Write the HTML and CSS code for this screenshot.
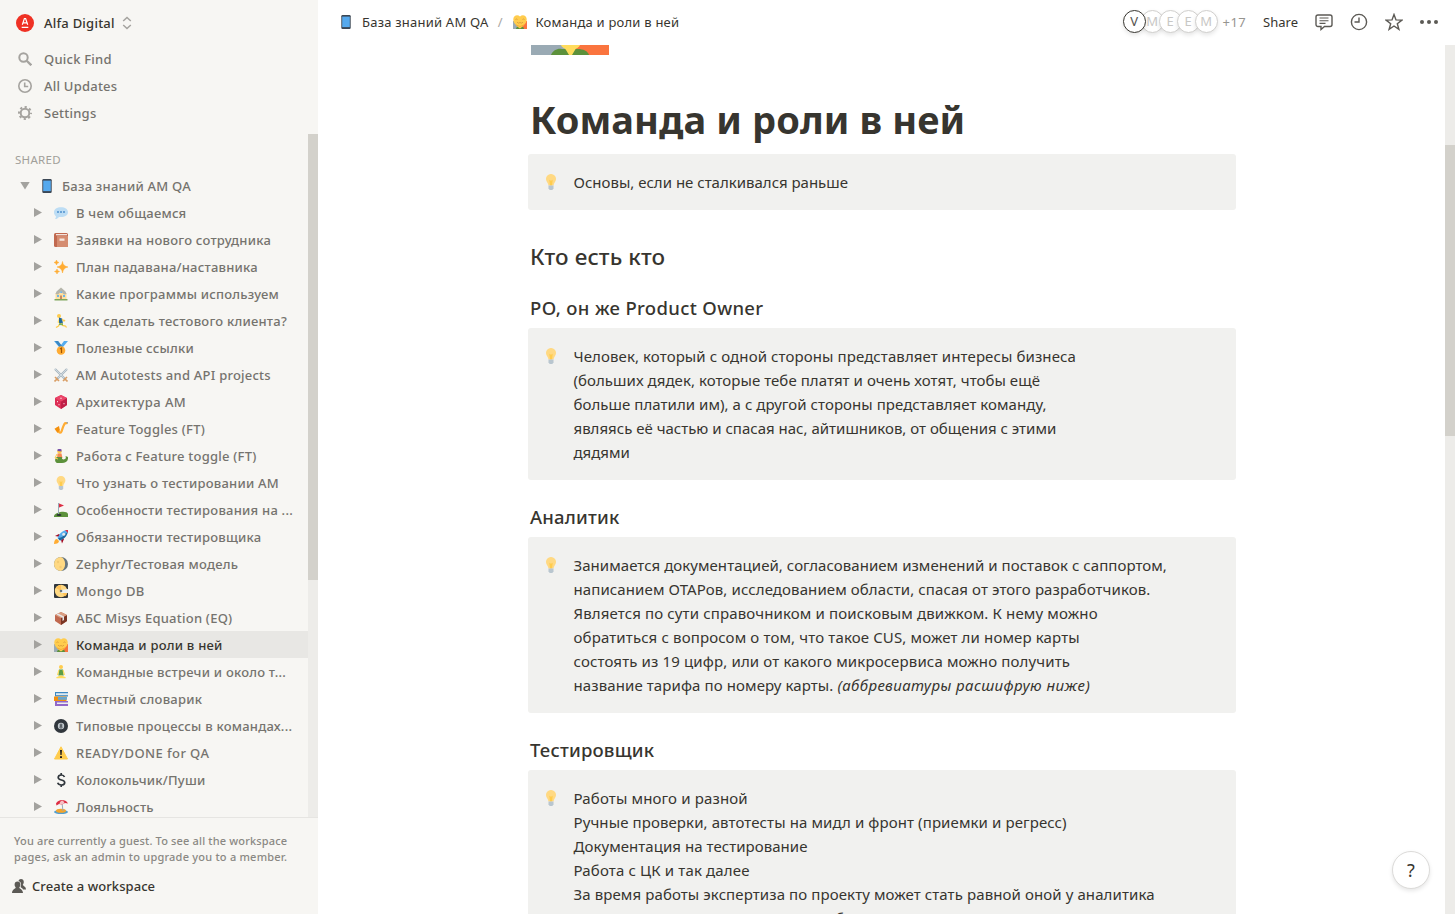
FILE: index.html
```html
<!DOCTYPE html>
<html lang="ru">
<head>
<meta charset="utf-8">
<title>Команда и роли в ней</title>
<link rel="stylesheet" href="styles.css">
</head>
<body>
<svg class="sprite" width="0" height="0" aria-hidden="true">
  <symbol id="phone" viewBox="0 0 14 14"><rect x="2.3" y="0" width="9.4" height="14" rx="1.2" fill="#3b4754"/><rect x="3.2" y="1.6" width="7.6" height="10.5" fill="#55a9ee"/></symbol>
  <symbol id="bulb" viewBox="0 0 14 14"><path d="M7 0a4.3 4.3 0 0 0-4.4 4.4C2.6 6.800 4.600 7.600 4.800 10h4.400c.2-2.400 2.200-3.200 2.200-5.600A4.300 4.300 0 0 0 7 0z" fill="#ffd983"/><path d="M5.500 5l1.500 1 1.500-1-.6 5H6.100z" fill="#ffcc4d"/><path d="M4.800 10h4.400v2.500L8.200 14H5.800l-1-1.500z" fill="#b9c6cf"/></symbol>
  <symbol id="hug" viewBox="0 0 14 14"><path d="M0 6h7v8H0z" fill="#9aaab4"/><path d="M7 6h7v8H7z" fill="#fa743e"/><path d="M3 14c0-2 2-3 4-3s4 1 4 3z" fill="#5c913b"/><path d="M7 13.500C4 11 0 8 .3 4 .5.500 4.500-1 7 1.500 9.500-1 13.500.5 13.700 4 14 8 10 11 7 13.500z" fill="#ffcc4d"/><path d="M2.500 4.500q1-1 2 0m5 0q1-1 2 0M4 7.200q1.500 1.700 3 .3 1.500 1.400 3-.3" fill="none" stroke="#c98a35" stroke-width=".6"/><path d="M3 10l4 1.500 4-1.500" fill="none" stroke="#f4a52c" stroke-width=".8"/></symbol>
  <symbol id="chat" viewBox="0 0 14 14"><path d="M7 1.300c4 0 7 2 7 4.900S11 11 7 11l-2-.1C4 12.300 2.500 13 1 12.900c.8-.8 1-1.700.9-2.700C.7 9.300 0 7.800 0 6.200c0-2.900 3-4.900 7-4.900z" fill="#bdddf4"/><path d="M3 5h2v2H3zm3 0h2v2H6zm3 0h2v2H9z" fill="#6aa4d8"/></symbol>
  <symbol id="book" viewBox="0 0 14 14"><rect width="14" height="14" rx="1.500" fill="#c1694f"/><path d="M2 1h11v1.300H2z" fill="#f3e4dc"/><path d="M3 3h11v11H3z" fill="#d58c70"/><path d="M5.500 5.500h5v2.300h-5z" fill="#f4e7df"/></symbol>
  <symbol id="spark" viewBox="0 0 14 14"><path d="M8.500 1.500q.6 4.700 5.500 5.500-4.900.8-5.500 6-.6-5.200-5.500-6 4.900-.8 5.500-5.500zM2.500 0q.3 2.200 2.500 2.500Q2.800 2.800 2.500 5 2.200 2.800 0 2.500 2.200 2.200 2.500 0zM3 9q.3 2.200 2.500 2.500Q3.300 11.800 3 14q-.3-2.200-2.500-2.500Q2.700 11.200 3 9z" fill="#ffac33" stroke="#ffac33" stroke-width=".5"/></symbol>
  <symbol id="house" viewBox="0 0 14 14"><path d="M1.500 6h11v7h-11z" fill="#ffe0a0"/><path d="M7 .5l4.500 4L12.500 7 10 7.500l-3-3-3 3L1.500 7l1-2.500z" fill="#b5b5ab"/><path d="M6.200 4.500h1.800v1.500H6.200zM3 8h2v2H3zm6 0h2v2H9z" fill="#6fb5e8"/><path d="M6 8.500h2V13H6z" fill="#c98a5f"/><path d="M.5 12h13v1.500H.5z" fill="#7ea65d"/></symbol>
  <symbol id="run" viewBox="0 0 14 14"><circle cx="5" cy="2" r="2" fill="#ffcc4d"/><path d="M4.500 4l-1 4.500 1.500.5z" fill="#ffdc5d"/><path d="M5 3.500l3 1 1 5-4 .5z" fill="#269"/><path d="M8 5l2 2 1-1M6 9l-1.500 3L2 13.500M7.500 9l1 2.500 3 .5 1 1.500" fill="none" stroke="#ffcc4d" stroke-width="1.300"/><path d="M5 9.500h4v1.700L5 11z" fill="#77b255"/></symbol>
  <symbol id="medal" viewBox="0 0 14 14"><path d="M0 0h4l3 4 3-4h4l-5 6H5z" fill="#55acee"/><path d="M4 0l4.500 5.500-3 .5L1 0z" fill="#3b88c3"/><circle cx="7" cy="9.500" r="4.300" fill="#ffac33"/><path d="M6 8l1.500-1v5" fill="none" stroke="#9e5200" stroke-width="1.200"/></symbol>
  <symbol id="swords" viewBox="0 0 14 14"><path d="M1 1l10 10M13 1L3 11" stroke="#a7b6c0" stroke-width="2.200"/><path d="M.5.500L10 10M13.500.500L4 10" stroke="#e1e8ed" stroke-width=".7"/><path d="M1 9l4 4m8-4l-4 4M3 11l-2.500 2.500M11 11l2.500 2.500" stroke="#d99e65" stroke-width="1.600"/></symbol>
  <symbol id="die" viewBox="0 0 14 14"><path d="M7 0l6 3v7l-6 4-6-4V3z" fill="#dd2e55"/><path d="M7 6.500L13 3v7l-6 4z" fill="#c01f47"/><path d="M7 0l6 3-6 3.500L1 3z" fill="#ea4568"/><path d="M6.200 2.700h1.600v1H6.200zM3 6h1v1.300H3zM4.500 9h1v1.300h-1zM9.500 8h1v1.300h-1z" fill="#fbd0d9"/></symbol>
  <symbol id="sax" viewBox="0 0 14 14"><path d="M13.500.8L11 1.300C9.500 3 8.500 6.500 7.500 9.500 7 11.300 5 11 4.500 9l-1-3.500" fill="none" stroke="#ffac33" stroke-width="2.200"/><path d="M.5 6.800L5 4l.8 4L3.500 11z" fill="#f4900c"/><path d="M12 0h2v2z" fill="#99aab5"/></symbol>
  <symbol id="mer" viewBox="0 0 14 14"><circle cx="5.500" cy="2.500" r="2.200" fill="#ffcc4d"/><path d="M3.500.5q2-1.300 4 0v2l-4-.5z" fill="#744eaa"/><path d="M3.500 4.500h4l1 4.500H3z" fill="#f58a55"/><path d="M3 8h5c-.5 2 1 3 3 2 1-.5 1-2 .5-3L14 8c.5 4-2.500 6-6 6H3C0 13 1 9 3 8z" fill="#5c913b"/><path d="M3 5l-2 4 3 1" fill="none" stroke="#ffcc4d"/></symbol>
  <symbol id="golf" viewBox="0 0 14 14"><path d="M0 13c1-4 13-6 14-2v3H0z" fill="#5c913b"/><path d="M4 0l6 2.500L4 5z" fill="#dd2e44"/><path d="M4.500 0v12" stroke="#99aab5"/><ellipse cx="5" cy="12" rx="2.500" ry="1" fill="#292f33"/></symbol>
  <symbol id="rocket" viewBox="0 0 14 14"><path d="M1 6l4-2 5 5-2 4.500-1-4-3-3z" fill="#a0041e"/><path d="M14 0C9 0 5.500 3 3.500 8L6 10.500C11 8.500 14 5 14 0z" fill="#55acee"/><path d="M8 7L4 8.500 6 10.500C10 9 13 6 13.600 2z" fill="#226699"/><circle cx="9.700" cy="4.300" r="1.500" fill="#e1e8ed"/><path d="M0 14c0-3 1-5 3-5l2 2c0 2-2 3-5 3z" fill="#ffac33"/><path d="M11 0h3v3z" fill="#dd2e44"/></symbol>
  <symbol id="moon" viewBox="0 0 14 14"><circle cx="7" cy="7" r="7" fill="#66757f"/><path d="M7 0c5.500 2 5.500 12 0 14A7 7 0 0 1 7 0z" fill="#ffd983"/><circle cx="4" cy="5" r="1.200" fill="#f3cb74"/><circle cx="6.500" cy="10" r="1.200" fill="#f3cb74"/></symbol>
  <symbol id="disk" viewBox="0 0 14 14"><rect width="14" height="14" rx="1" fill="#31373d"/><circle cx="7" cy="7" r="6.200" fill="#ffd983"/><path d="M7 7V1a6 6 0 0 0-5 3zM7 7l4 5.500q2-1.500 2.300-3.500z" fill="#ffc257"/><path d="M7 6l7-1v4H7z" fill="#ebf0f2"/><circle cx="7" cy="7" r="1.300" fill="#66757f"/></symbol>
  <symbol id="box" viewBox="0 0 14 14"><path d="M7 1l6 3v6l-6 4-6-4V4z" fill="#c1694f"/><path d="M7 7l6-3v6l-6 4z" fill="#7a3523"/><path d="M7 1l6 3-6 3.200L1 4z" fill="#d99e82"/><path d="M4 2.500l6 3V9L8.500 10V6.500l-6-3z" fill="#e6e7e8"/></symbol>
  <symbol id="yoga" viewBox="0 0 14 14"><circle cx="7" cy="2" r="2" fill="#ffcc4d"/><path d="M5 4.500h4l.7 6H4.300z" fill="#5c9e46"/><path d="M5 5l-1.500 5M9 5l1.500 5M2.500 12.700l4-1.700h1l4 1.700z" fill="#ffcc4d" stroke="#ffdc5d" stroke-width="1.100"/></symbol>
  <symbol id="books" viewBox="0 0 14 14"><path d="M1 0h13v4.500H1z" fill="#3b88c3"/><path d="M2 1.200h12v2H2z" fill="#dce9f0"/><path d="M0 4.500h12.500V9H0z" fill="#f4900c"/><path d="M4 5h9v2.800H4z" fill="#67a6ce"/><path d="M1 9h13v5H1z" fill="#9268ca"/><path d="M3 10.500h11V12H3z" fill="#eee"/></symbol>
  <symbol id="eight" viewBox="0 0 14 14"><circle cx="7" cy="7" r="7" fill="#31373d"/><circle cx="7" cy="7" r="3.200" fill="#c5ccd1"/><circle cx="7" cy="6" r="1" fill="none" stroke="#31373d" stroke-width=".8"/><circle cx="7" cy="8.100" r="1.100" fill="none" stroke="#31373d" stroke-width=".8"/></symbol>
  <symbol id="warn" viewBox="0 0 14 14"><path d="M7 .8L13.500 13H.5z" fill="#ffcc4d" stroke="#ffcc4d" stroke-linejoin="round"/><path d="M6 4h2l-.4 5H6.400zM6 10.200h2v1.700H6z" fill="#231f20"/></symbol>
  <symbol id="dollar" viewBox="0 0 14 14"><path d="M10.500 4C10 2.600 8.800 2 7.300 2 5.500 2 4.200 3 4.200 4.500c0 3.500 6.500 1.500 6.500 5 0 1.600-1.500 2.500-3.400 2.500C5.500 12 4.200 11.200 3.700 9.800M7.200 0v2M7.200 12v2" fill="none" stroke="#31373d" stroke-width="1.700"/></symbol>
  <symbol id="beach" viewBox="0 0 14 14"><ellipse cx="7" cy="12" rx="7" ry="2" fill="#55a0d0"/><ellipse cx="7" cy="10.700" rx="5" ry="2" fill="#f4a52c"/><path d="M8 3l1 8" stroke="#99aab5"/><path d="M2 3.500C4-.5 11-1.500 14 3.500l-3-.5-3 1.500L5 4 2.500 5.500z" fill="#dd2e44"/><path d="M8 .5C6 1.500 5.500 3 5.500 4L8 4.400l2.500-1.200C10 1.500 9 .8 8 .5z" fill="#f5c0c4"/></symbol>
</svg>
<div class="app">
  <aside class="sidebar">
    <div class="workspace">
      <svg class="logo" viewBox="0 0 18 18"><circle cx="9" cy="9" r="9" fill="#ef3124"/><path d="M6.300 10.800L8.400 4.500h1.200l2.100 6.300M7.200 8.800h3.600M5.700 13.300h6.600" fill="none" stroke="#fff" stroke-width="1.200"/></svg>
      <span class="workspace-name">Alfa Digital</span>
      <svg class="updown" viewBox="0 0 10 14"><path d="M1.200 5L5 1.500 8.800 5M1.200 9L5 12.500 8.800 9" fill="none" stroke="#a5a39f" stroke-width="1.500"/></svg>
    </div>
    <nav class="menu">
      <a><svg viewBox="0 0 14 14"><circle cx="5.500" cy="5.500" r="4.200"/><path d="M8.700 8.700l4.600 4.600" stroke-width="2.300"/></svg><span>Quick Find</span></a>
      <a><svg viewBox="0 0 14 14"><circle cx="7" cy="7" r="6.200" stroke-width="1.600"/><path d="M6.700 3.500v4h3.500" stroke-width="1.600"/></svg><span>All Updates</span></a>
      <a><svg viewBox="0 0 14 14"><circle cx="7" cy="7" r="4.300" stroke-width="2"/><circle cx="7" cy="7" r="6" stroke-dasharray="2.200 2.512" stroke-dashoffset="1.100" stroke-width="2"/></svg><span>Settings</span></a>
    </nav>
    <div class="tree-scroll">
      <div class="tree">
        <div class="label">SHARED</div>
        <div class="row root"><i class="arrow down"></i><svg><use href="#phone"/></svg><span>База знаний AM QA</span></div>
        <div class="row"><i class="arrow"></i><svg><use href="#chat"/></svg><span>В чем общаемся</span></div>
        <div class="row"><i class="arrow"></i><svg><use href="#book"/></svg><span>Заявки на нового сотрудника</span></div>
        <div class="row"><i class="arrow"></i><svg><use href="#spark"/></svg><span>План падавана/наставника</span></div>
        <div class="row"><i class="arrow"></i><svg><use href="#house"/></svg><span>Какие программы используем</span></div>
        <div class="row"><i class="arrow"></i><svg><use href="#run"/></svg><span>Как сделать тестового клиента?</span></div>
        <div class="row"><i class="arrow"></i><svg><use href="#medal"/></svg><span>Полезные ссылки</span></div>
        <div class="row"><i class="arrow"></i><svg><use href="#swords"/></svg><span>AM Autotests and API projects</span></div>
        <div class="row wide"><i class="arrow"></i><svg><use href="#die"/></svg><span>Архитектура AM</span></div>
        <div class="row"><i class="arrow"></i><svg><use href="#sax"/></svg><span>Feature Toggles (FT)</span></div>
        <div class="row"><i class="arrow"></i><svg><use href="#mer"/></svg><span>Работа с Feature toggle (FT)</span></div>
        <div class="row"><i class="arrow"></i><svg><use href="#bulb"/></svg><span>Что узнать о тестировании AM</span></div>
        <div class="row"><i class="arrow"></i><svg><use href="#golf"/></svg><span>Особенности тестирования на ...</span></div>
        <div class="row"><i class="arrow"></i><svg><use href="#rocket"/></svg><span>Обязанности тестировщика</span></div>
        <div class="row"><i class="arrow"></i><svg><use href="#moon"/></svg><span>Zephyr/Тестовая модель</span></div>
        <div class="row wide"><i class="arrow"></i><svg><use href="#disk"/></svg><span>Mongo DB</span></div>
        <div class="row"><i class="arrow"></i><svg><use href="#box"/></svg><span>АБС Misys Equation (EQ)</span></div>
        <div class="row active"><i class="arrow"></i><svg><use href="#hug"/></svg><span>Команда и роли в ней</span></div>
        <div class="row"><i class="arrow"></i><svg><use href="#yoga"/></svg><span>Командные встречи и около т...</span></div>
        <div class="row"><i class="arrow"></i><svg><use href="#books"/></svg><span>Местный словарик</span></div>
        <div class="row"><i class="arrow"></i><svg><use href="#eight"/></svg><span>Типовые процессы в командах...</span></div>
        <div class="row wide"><i class="arrow"></i><svg><use href="#warn"/></svg><span>READY/DONE for QA</span></div>
        <div class="row"><i class="arrow"></i><svg><use href="#dollar"/></svg><span>Колокольчик/Пуши</span></div>
        <div class="row"><i class="arrow"></i><svg><use href="#beach"/></svg><span>Лояльность</span></div>
      </div>
      <div class="scrollbar"><div class="thumb"></div></div>
    </div>
    <footer class="guest">
      <p>You are currently a guest. To see all the workspace<br><span class="second">pages, ask an admin to upgrade you to a member.</span></p>
      <div class="create"><svg viewBox="0 0 14 14"><path d="M9 0c1.700 0 2.800 1.200 2.800 3 0 1.300-.5 2-1 2.700.2 1.300 3.200 1.500 3.200 4.800h-3C10.500 9 9 8.600 8.500 8 9.500 6 9.500 3 6.500 2 6.800.8 7.700 0 9 0z"/><path d="M5.500 2.500c1.800 0 2.900 1.300 2.900 3.100 0 1.300-.5 2.200-1.100 2.900.2 1.500 3.600 1.500 3.700 5.500H0c.1-4 3.500-4 3.700-5.500-.6-.7-1.100-1.600-1.100-2.900 0-1.800 1.100-3.100 2.900-3.100z"/></svg><span>Create a workspace</span></div>
    </footer>
  </aside>
  <main class="main">
    <header class="topbar">
      <svg class="e"><use href="#phone"/></svg><span class="crumb">База знаний AM QA</span><span class="slash">/</span>
      <svg class="e"><use href="#hug"/></svg><span class="crumb">Команда и роли в ней</span>
      <div class="people"><b class="on">V</b><b>M</b><b>E</b><b>E</b><b>M</b></div>
      <span class="more">+17</span>
      <span class="share">Share</span>
      <svg class="act" viewBox="0 0 18 18"><path d="M3 2h12a2 2 0 0 1 2 2v7.500a2 2 0 0 1-2 2H9.500L6 16.500v-3H3a2 2 0 0 1-2-2V4a2 2 0 0 1 2-2z"/><path d="M4.500 5h9M4.500 7.700h9M4.500 10.400h6" stroke-width="1.100"/></svg>
      <svg class="act" viewBox="0 0 18 18"><circle cx="9" cy="9" r="7.600"/><path d="M9 4.500V9H4.500"/></svg>
      <svg class="act" viewBox="0 0 18 18"><path d="M9 1.500l2 5.400 5.900.2-4.600 3.600 1.600 5.600L9 13l-4.900 3.300 1.600-5.600L1.100 7.100 7 6.900z"/></svg>
      <svg class="act dots" viewBox="0 0 18 18"><circle cx="2" cy="9" r="2"/><circle cx="9" cy="9" r="2"/><circle cx="16" cy="9" r="2"/></svg>
    </header>
    <div class="scroll">
      <article class="page">
        <svg class="cover" viewBox="0 0 78 10"><path d="M0 0h39v10H0z" fill="#9aaab4"/><path d="M39 0h39v10H39z" fill="#fa743e"/><path d="M20 10C22 5 27 3 31 4h16c5 0 10 2 11 6z" fill="#5c913b"/><path d="M30 0h19c-1 3-4 3-5 5l-3 5h-3l-3-5c-1-2-4-2-5-5z" fill="#ffdc5d"/></svg>
        <h1>Команда и роли в ней</h1>
        <section class="callout"><svg><use href="#bulb"/></svg><div>Основы, если не сталкивался раньше</div></section>
        <h2>Кто есть кто</h2>
        <h3 class="latin">PO, он же Product Owner</h3>
        <section class="callout"><svg><use href="#bulb"/></svg><div><span class="t2">Человек, который с одной стороны представляет интересы бизнеса</span><br><span class="t1">(больших дядек, которые тебе платят и очень хотят, чтобы ещё</span><br><span class="t1">больше платили им), а с другой стороны представляет команду,</span><br>являясь её частью и спасая нас, айтишников, от общения с этими<br>дядями</div></section>
        <h3>Аналитик</h3>
        <section class="callout"><svg><use href="#bulb"/></svg><div><span class="t1">Занимается документацией, согласованием изменений и поставок с саппортом,</span><br><span class="t2">написанием ОТАРов, исследованием области, спасая от этого разработчиков.</span><br><span class="t3">Является по сути справочником и поисковым движком. К нему можно</span><br><span class="t3">обратиться с вопросом о том, что такое CUS, может ли номер карты</span><br><span class="t3">состоять из 19 цифр, или от какого микросервиса можно получить</span><br><span class="t2">название тарифа по номеру карты.</span> <em>(аббревиатуры расшифрую ниже)</em></div></section>
        <h3>Тестировщик</h3>
        <section class="callout"><svg><use href="#bulb"/></svg><div><span class="t3">Работы много и разной</span><br><span class="t2">Ручные проверки, автотесты на мидл и фронт (приемки и регресс)</span><br><span class="t1">Документация на тестирование</span><br><span class="t3">Работа с ЦК и так далее</span><br><span class="t2">За время работы экспертиза по проекту может стать равной оной у аналитика</span><br><span class="t2">Написание тестов, сценариев и разбор</span></div></section>
      </article>
      <div class="scrollbar"><div class="thumb"></div></div>
    </div>
    <button class="help">?</button>
  </main>
</div>
</body>
</html>
```
FILE: styles.css
```css
* { box-sizing: border-box; }
body { margin: 0; font-family: "Noto Sans", "Open Sans", sans-serif; color: #37352f; overflow: hidden; }
.sprite { position: absolute; }
.app { display: flex; width: 1455px; height: 914px; }
.sidebar { width: 318px; flex: none; display: flex; flex-direction: column; background: #f7f6f3; font-size: 13px; font-weight: 500; letter-spacing: .23px; color: #75736e; white-space: nowrap; }
.workspace { display: flex; align-items: center; height: 45px; padding: 1px 0 0 16px; color: #37352f; }
.logo { width: 18px; height: 18px; margin-right: 10px; }
.updown { width: 10px; height: 14px; margin-left: 7px; }
.menu { height: 89px; }
.menu a { display: flex; align-items: center; height: 27px; padding-left: 18px; gap: 12px; }
.menu svg { width: 14px; height: 14px; fill: none; stroke: #a5a39f; stroke-width: 2; }
.tree-scroll { display: flex; height: 683px; overflow: hidden; }
.tree { width: 308px; padding-top: 11px; }
.label { height: 27px; line-height: 29px; padding-left: 15px; font-size: 11.5px; font-weight: 400; color: #a19f9a; letter-spacing: .3px; }
.row { display: flex; align-items: center; height: 27px; padding-left: 34px; }
.row.root { padding-left: 20px; }
.row svg { width: 14px; height: 14px; margin: 0 8px 0 12px; flex: none; }
.row.active { background: #e8e7e4; color: #37352f; }
.row.wide { letter-spacing: .42px; }
.arrow { width: 8px; height: 9px; background: #a3a29e; clip-path: polygon(0 0, 100% 50%, 0 100%); flex: none; }
.arrow.down { width: 10px; height: 8px; margin-right: -2px; clip-path: polygon(0 0, 100% 0, 50% 100%); }
.scrollbar { width: 10px; flex: none; background: #edece9; }
.thumb { background: #d3d1cb; }
.tree-scroll .thumb { height: 446px; }
.guest { flex: 1; border-top: 1px solid #e6e5e2; padding: 15px 0 0 14px; }
.guest p { margin: 0; font-size: 11px; line-height: 16px; color: #8a8883; letter-spacing: .16px; }
.guest .second { letter-spacing: .22px; }
.create { display: flex; align-items: center; gap: 6px; height: 27px; margin: 7px 0 0 -2px; color: #37352f; letter-spacing: .07px; }
.create svg { width: 14px; height: 14px; fill: #5c5a55; }
.main { position: relative; flex: 1; display: flex; flex-direction: column; min-width: 0; }
.topbar { display: flex; align-items: center; height: 45px; padding: 0 17px 2px 21px; font-size: 13px; flex: none; }
.e { width: 14px; height: 14px; margin-right: 9px; }
.crumb { letter-spacing: .22px; }
.slash { color: #aaa8a4; margin: 0 10px 0 9px; }
.people { display: flex; margin-left: auto; }
.people b { width: 23px; height: 23px; margin-right: -5px; border: 1px solid #d0cfcd; border-radius: 50%; background: #fff; color: #c8c7c5; font: 13px/21px "Noto Sans", sans-serif; text-align: center; box-shadow: 0 2px 4px #0000001a; }
.people .on { position: relative; z-index: 1; border-color: #37352f; color: #55534e; }
.more { color: #96948f; margin: 0 17px 0 10px; letter-spacing: .4px; }
.share { margin-right: 17px; }
.act { width: 18px; height: 18px; fill: none; stroke: #5c5a55; stroke-width: 1.4; margin-right: 17px; }
.dots { fill: #5c5a55; stroke: none; margin-right: 0; }
.scroll { flex: 1; display: flex; justify-content: space-between; overflow: hidden; min-height: 0; }
.page { width: 708px; margin-left: 210px; }
.cover { display: block; width: 78px; height: 10px; margin-left: 3px; }
h1, h2, h3 { margin: 0; padding-left: 2px; white-space: nowrap; }
h1 { font-size: 38px; line-height: 48px; font-weight: 700; margin: 40px 0 11px; letter-spacing: .12px; }
h2 { font-size: 22.5px; line-height: 31px; font-weight: 500; margin: 31px 0 -1px; letter-spacing: .12px; }
h3 { font-size: 18.5px; line-height: 26px; font-weight: 500; margin: 24px 0 7px; letter-spacing: .2px; }
h3.latin { letter-spacing: .35px; }
.callout { display: flex; padding: 16px; gap: 14.5px; border-radius: 3px; background: #f1f1ef; font-size: 15px; line-height: 24px; white-space: nowrap; }
.callout svg { width: 16px; height: 16px; margin: 4px 0 0 -1px; flex: none; }
.t1 { letter-spacing: .05px; }
.t2 { letter-spacing: .1px; }
.t3 { letter-spacing: .14px; }
em { letter-spacing: .4px; }
.scroll .thumb { margin-top: 100px; height: 291px; }
.help { position: absolute; right: 25px; bottom: 25px; width: 38px; height: 38px; border: 1px solid #dcdbd9; border-radius: 50%; background: #fff; color: #37352f; font: 18px "Noto Sans", sans-serif; box-shadow: 0 2px 4px #0000001a; padding: 0; }
```
